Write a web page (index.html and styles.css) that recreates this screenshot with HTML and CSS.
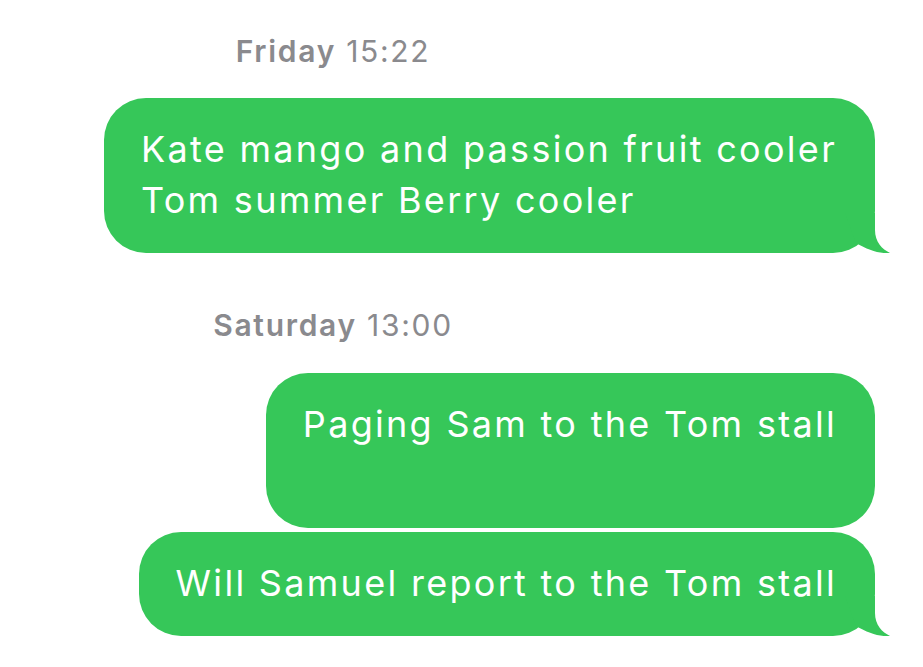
FILE: index.html
```html
<!DOCTYPE html>
<html lang="en">
<head>
<meta charset="utf-8">
<title>Messages</title>
<link rel="stylesheet" href="styles.css">
</head>
<body>
<main class="thread">
  <div class="stamp"><b>Friday</b> 15:22</div>
  <div class="row first">
    <div class="bubble">
      <p>Kate mango and passion fruit cooler<br>Tom summer Berry cooler</p>
      <svg class="tail" viewBox="0 0 47 40" width="47" height="40" aria-hidden="true"><path d="M30 0 L30 17 C30 29 37 36 45 40 C35 41 23 37 11 30 L0 0 Z"/></svg>
    </div>
  </div>
  <div class="stamp second"><b>Saturday</b> 13:00</div>
  <div class="row third">
    <div class="bubble tall">
      <p>Paging Sam to the Tom stall</p>
    </div>
  </div>
  <div class="row grouped">
    <div class="bubble">
      <p>Will Samuel report to the Tom stall</p>
      <svg class="tail" viewBox="0 0 47 40" width="47" height="40" aria-hidden="true"><path d="M30 0 L30 17 C30 29 37 36 45 40 C35 41 23 37 11 30 L0 0 Z"/></svg>
    </div>
  </div>
</main>
</body>
</html>
```
FILE: styles.css
```css
html, body {
  margin: 0;
  padding: 0;
  background: #ffffff;
}
body {
  font-family: "Inter", "Noto Sans", "Liberation Sans", sans-serif;
  width: 923px;
  height: 667px;
  overflow: hidden;
}
.thread {
  display: flex;
  flex-direction: column;
  padding: 33px 48px 0 0;
}
.stamp {
  width: 666px;
  text-align: center;
  font-size: 30px;
  line-height: 36px;
  letter-spacing: 1.7px;
  color: #8a8a8e;
  font-weight: 400;
}
.stamp b {
  font-weight: 600;
}
.stamp.second {
  margin-top: 54px;
}
.row {
  display: flex;
  justify-content: flex-end;
}
.row.first {
  margin-top: 29px;
}
.row.third {
  margin-top: 30px;
}
.row.grouped {
  margin-top: 4px;
}
.bubble {
  position: relative;
  background: #36c759;
  border-radius: 42px;
  padding: 26px 38px 27px 37px;
  color: #ffffff;
}
.bubble p {
  margin: 0;
  font-size: 36px;
  line-height: 51px;
  letter-spacing: 2.3px;
  white-space: nowrap;
}
.bubble.tall p {
  min-height: 102px;
}
.tail {
  position: absolute;
  right: -17px;
  bottom: 0;
  fill: #36c759;
}
```
